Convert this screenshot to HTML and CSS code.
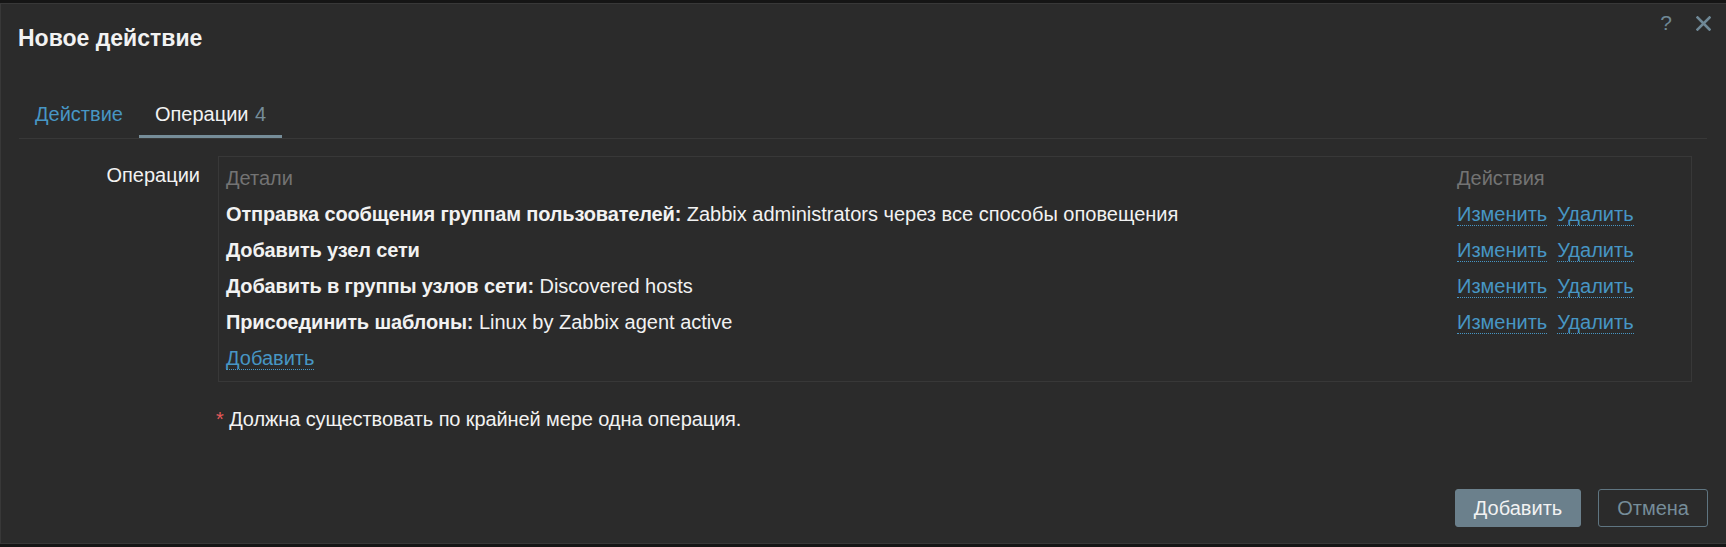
FILE: index.html
```html
<!DOCTYPE html>
<html lang="ru">
<head>
<meta charset="utf-8">
<title>Новое действие</title>
<link rel="stylesheet" href="styles.css">
</head>
<body>
<div class="overlay">
  <div class="dialog">
    <div class="dialog-head">
      <h4 class="dialog-title">Новое действие</h4>
      <div class="head-controls">
        <button class="btn-icon btn-help" type="button">?</button>
        <button class="btn-icon btn-close" type="button" aria-label="Закрыть">
          <svg width="15" height="15" viewBox="0 0 15 15"><path d="M1.5 1.5 L13.5 13.5 M13.5 1.5 L1.5 13.5" stroke="currentColor" stroke-width="2.6" stroke-linecap="square" fill="none"/></svg>
        </button>
      </div>
    </div>
    <div class="dialog-body">
      <ul class="tabs">
        <li class="tab"><a class="tab-link">Действие</a></li>
        <li class="tab tab-active">Операции <span class="tab-count">4</span></li>
      </ul>
      <div class="form-grid">
        <div class="form-label">Операции</div>
        <div class="form-field">
          <div class="ops-box">
            <table class="ops-table">
              <colgroup><col><col class="col-actions"></colgroup>
              <thead>
                <tr><th class="cell-details">Детали</th><th>Действия</th></tr>
              </thead>
              <tbody>
                <tr><td class="cell-details"><b>Отправка сообщения группам пользователей:</b> Zabbix administrators через все способы оповещения</td><td><a class="link">Изменить</a><a class="link link-gap">Удалить</a></td></tr>
                <tr><td class="cell-details"><b>Добавить узел сети</b></td><td><a class="link">Изменить</a><a class="link link-gap">Удалить</a></td></tr>
                <tr><td class="cell-details"><b>Добавить в группы узлов сети:</b> Discovered hosts</td><td><a class="link">Изменить</a><a class="link link-gap">Удалить</a></td></tr>
                <tr><td class="cell-details"><b>Присоединить шаблоны:</b> Linux by Zabbix agent active</td><td><a class="link">Изменить</a><a class="link link-gap">Удалить</a></td></tr>
                <tr><td class="cell-details" colspan="2"><a class="link">Добавить</a></td></tr>
              </tbody>
            </table>
          </div>
          <div class="note"><span class="req">*</span> Должна существовать по крайней мере одна операция.</div>
        </div>
      </div>
    </div>
    <div class="dialog-foot">
      <button class="btn btn-primary" type="button">Добавить</button>
      <button class="btn btn-alt" type="button">Отмена</button>
    </div>
  </div>
</div>
</body>
</html>
```

FILE: styles.css
```css
* { box-sizing: border-box; }
html, body { margin: 0; padding: 0; }
body {
  background: #151515;
  font-family: "Liberation Sans", Arial, sans-serif;
  font-size: 20px;
  color: #f2f2f2;
  overflow: hidden;
  height: 547px;
}
.overlay { padding-top: 3px; height: 547px; }
.dialog {
  height: 541px;
  background: #2b2b2b;
  border: 1px solid #383838;
  border-right: none;
  display: flex;
  flex-direction: column;
}
.dialog-head {
  display: flex;
  justify-content: space-between;
  align-items: flex-start;
  padding: 8px 15px 0 17px;
}
.dialog-title {
  margin: 13px 0 0 0;
  font-size: 23px;
  line-height: 26px;
  font-weight: bold;
  color: #f2f2f2;
}
.head-controls { display: flex; align-items: center; gap: 24px; height: 22px; }
.btn-icon {
  background: none; border: 0; padding: 0; margin: 0;
  color: #6f8896;
  font-family: "Liberation Sans", Arial, sans-serif;
  font-size: 21px; line-height: 22px;
  display: flex; align-items: center;
}
.btn-close svg { display: block; }

.tabs {
  list-style: none;
  margin: 52px 19px 0 18px;
  padding: 0;
  display: flex;
  border-bottom: 1px solid #383838;
}
.tab {
  padding: 0 16px 10px 16px;
  line-height: 22px;
  border-bottom: 3px solid transparent;
}
.tab-link { color: #4796c4; }
.tab-active { color: #f2f2f2; border-bottom-color: #768d99; }
.tab-count { color: #768d99; margin-left: 1px; }

.form-grid {
  display: grid;
  grid-template-columns: 199px 1fr;
  column-gap: 18px;
  padding-right: 34px;
  margin-top: 17px;
}
.form-label {
  text-align: right;
  padding-top: 8px;
  line-height: 22px;
}
.ops-box {
  border: 1px solid #383838;
  padding: 3px 0 5px 0;
}
.ops-table {
  width: 100%;
  border-collapse: collapse;
  table-layout: fixed;
}
.col-actions { width: 242px; }
.ops-table th, .ops-table td {
  padding: 0 8px;
  height: 36px;
  line-height: 36px;
  text-align: left;
  white-space: nowrap;
  vertical-align: middle;
}
.ops-table .cell-details { padding-left: 7px; }
.ops-table th { font-weight: normal; color: #737373; }
.ops-table b { letter-spacing: -0.15px; }
.link {
  color: #4796c4;
  text-decoration: none;
  border-bottom: 1px dotted #4796c4;
  line-height: normal;
}
.link-gap { margin-left: 10px; }

.note {
  margin: 26px 0 0 -2px;
  line-height: 22px;
  letter-spacing: -0.1px;
}
.req { color: #e45959; }

.dialog-foot {
  margin-top: auto;
  display: flex;
  justify-content: flex-end;
  gap: 17px;
  padding: 0 18px 16px 0;
}
.btn {
  height: 38px;
  padding: 0 18px;
  border-radius: 3px;
  font-family: "Liberation Sans", Arial, sans-serif;
  font-size: 20px;
  border: 1px solid #768d99;
}
.btn-primary { background: #6b808c; border-color: #6b808c; color: #f2f2f2; }
.btn-alt { background: #2b2b2b; border-color: #5f7581; color: #768d99; }
```
